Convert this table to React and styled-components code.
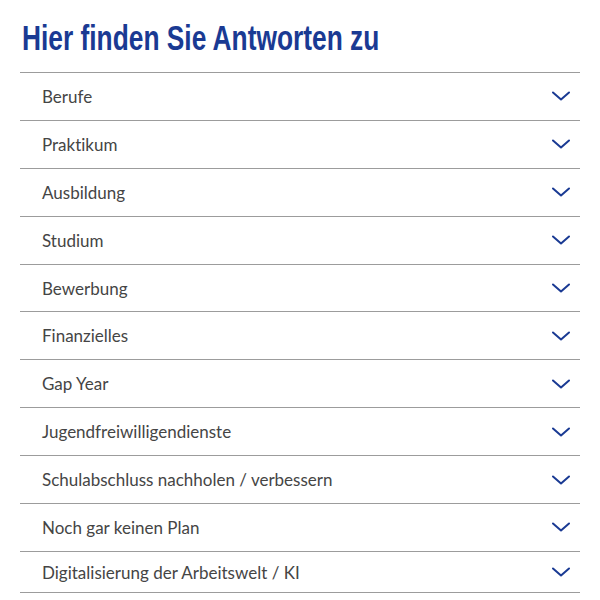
import React from 'react';
import styled, { createGlobalStyle } from 'styled-components';

const GlobalStyle = createGlobalStyle`
  body {
    margin: 0;
    background: #ffffff;
    font-family: 'Lato', 'Open Sans', sans-serif;
  }
`;

const Page = styled.div`
  padding: 14px 20px 0;
`;

const Header = styled.div`
  height: 58px;
  overflow: hidden;
`;

/* narrow headline face: squeeze a bold grotesk horizontally */
const Title = styled.h2`
  display: inline-block;
  margin: 0 0 0 2px;
  font-family: 'Liberation Sans', Arial, sans-serif;
  font-weight: bold;
  font-size: 35px;
  line-height: 48px;
  color: #1a3a93;
  white-space: nowrap;
  transform: scaleX(0.752);
  transform-origin: left center;
`;

const List = styled.div`
  border-top: 1px solid #9c9c9c;
`;

const Row = styled.button`
  display: flex;
  align-items: center;
  justify-content: space-between;
  width: 100%;
  height: ${p => (p.$short ? '41.4px' : '47.9px')};
  padding: 0 10px 0 22px;
  border: 0;
  border-bottom: 1px solid #9c9c9c;
  background: transparent;
  cursor: pointer;
  box-sizing: border-box;
`;

const Label = styled.span`
  font-family: 'Lato', 'Open Sans', sans-serif;
  font-size: 17px;
  font-weight: 400;
  font-variant-ligatures: none;
  color: #454545;
`;

const Chevron = () => (
  <svg width="18" height="10" viewBox="0 0 18 10" fill="none">
    <path d="M1 1.5 L9 8.5 L17 1.5" stroke="#1a3a93" strokeWidth="2" strokeLinecap="round" strokeLinejoin="round" />
  </svg>
);

const topics = [
  'Berufe',
  'Praktikum',
  'Ausbildung',
  'Studium',
  'Bewerbung',
  'Finanzielles',
  'Gap Year',
  'Jugendfreiwilligendienste',
  'Schulabschluss nachholen / verbessern',
  'Noch gar keinen Plan',
  'Digitalisierung der Arbeitswelt / KI',
];

export default function App() {
  return (
    <Page>
      <GlobalStyle />
      <Header>
        <Title>Hier finden Sie Antworten zu</Title>
      </Header>
      <List>
        {topics.map((t, i) => (
          <Row key={t} $short={i === topics.length - 1}>
            <Label>{t}</Label>
            <Chevron />
          </Row>
        ))}
      </List>
    </Page>
  );
}
